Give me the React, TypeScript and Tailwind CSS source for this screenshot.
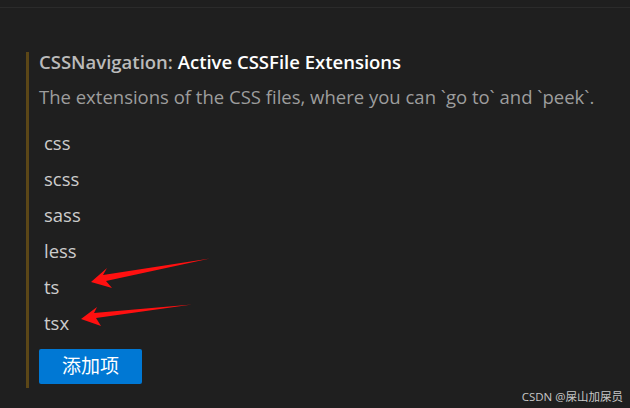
import React from 'react';

const extensions = ['css', 'scss', 'sass', 'less', 'ts', 'tsx'];

const font = { fontFamily: '"Open Sans", "Noto Sans", "Noto Sans CJK SC", sans-serif' };

export default function App() {
  return (
    <div className="relative h-[408px] w-[630px] overflow-hidden bg-[#1f1f1f]" style={font}>
      {/* top divider */}
      <div className="mt-[7px] h-px w-full bg-[#2b2b2b]" />

      <div className="ml-[26px] mt-[44px] flex flex-col border-l-[3px] border-[#5c4717] pb-[4px] pl-[10px]">
        <div className="h-[20px] text-[18.5px] font-semibold leading-[20px] whitespace-nowrap">
          <span className="text-[#bbbbbb]">CSSNavigation: </span>
          <span className="text-white">Active CSSFile Extensions</span>
        </div>
        <p className="mt-[13px] h-[24px] text-[18.5px] leading-[24px] text-[#9d9d9d] whitespace-nowrap">
          The extensions of the CSS files, where you can `go to` and `peek`.
        </p>

        <ul className="mt-[16px] flex flex-col pl-[5px]">
          {extensions.map((ext) => (
            <li key={ext} className="h-[36px] text-[18.5px] leading-[36px] text-[#cccccc]">
              {ext}
            </li>
          ))}
        </ul>

        <button className="mt-[8px] flex h-[35px] w-[103px] items-center justify-center rounded-[2px] bg-[#0078d4] text-[19px] text-white">
          添加项
        </button>
      </div>

      {/* annotation arrows */}
      <svg className="pointer-events-none absolute left-0 top-0" width="630" height="408">
        <polygon points="91,282 107,268 103,275 210,258.5 106,281 112,288" fill="#ff1010" />
        <polygon points="81,319 97,307 94,313 192,304.5 96,318 101,326" fill="#ff1010" />
      </svg>

      <div className="absolute bottom-[3px] right-[7px] text-[11.5px] leading-[16px] text-[#c8c8c8]">
        CSDN @屎山加屎员
      </div>
    </div>
  );
}
